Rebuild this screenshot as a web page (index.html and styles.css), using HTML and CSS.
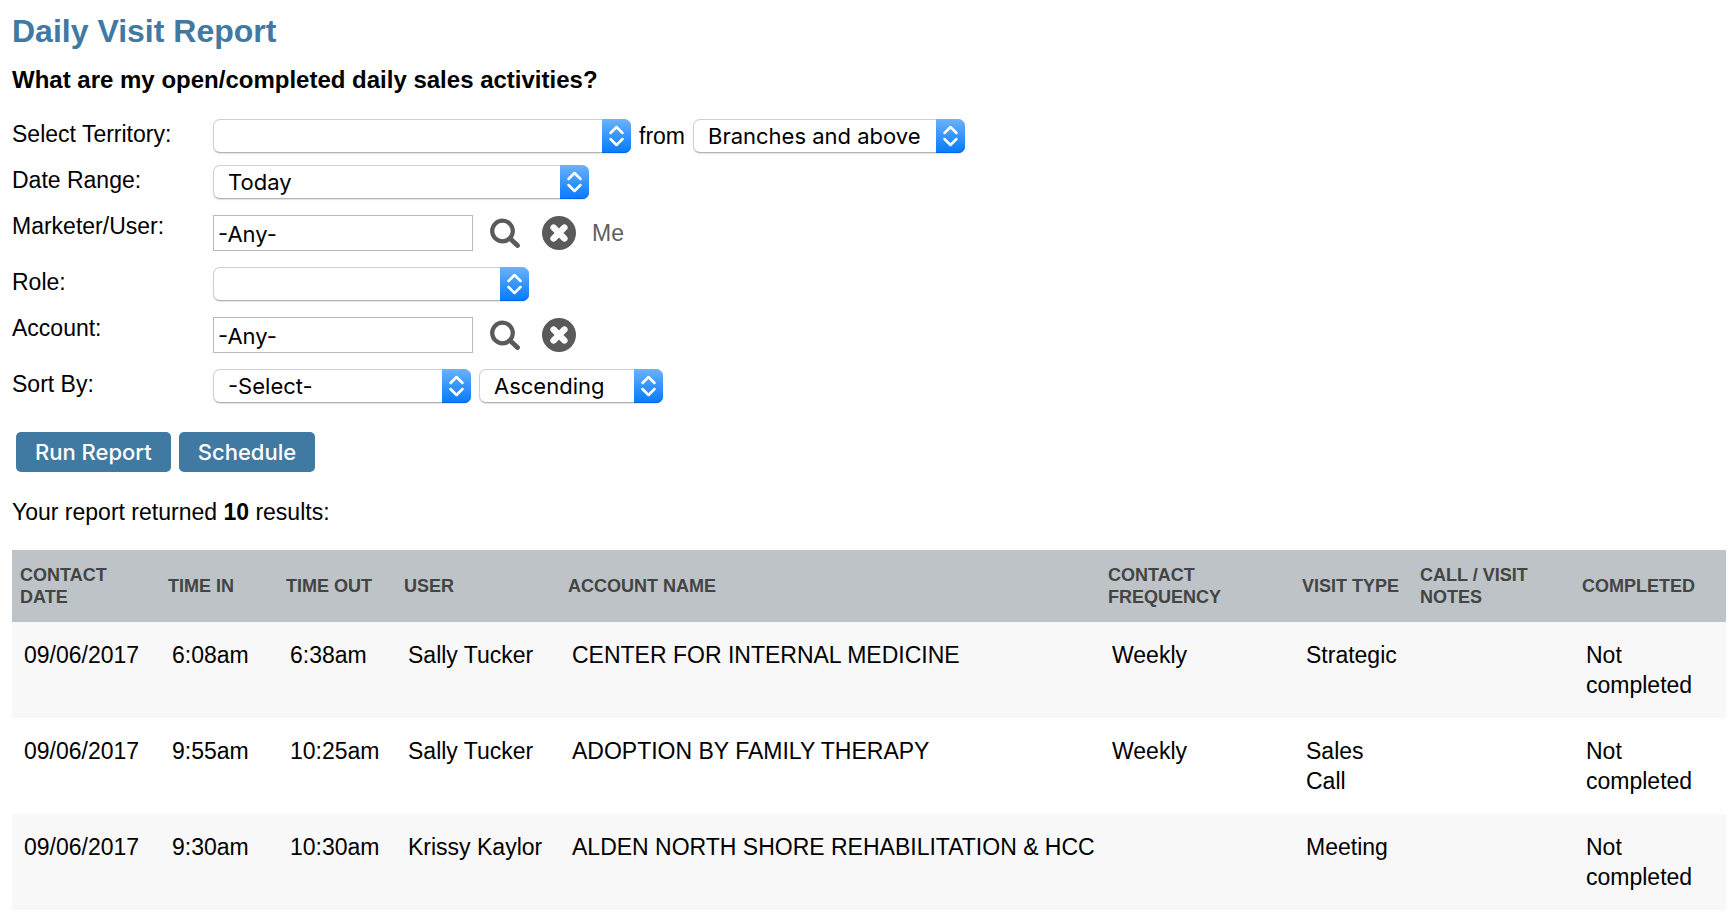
FILE: index.html
```html
<!DOCTYPE html>
<html lang="en">

<head>
  <meta charset="UTF-8">
  <meta name="viewport" content="width=device-width, initial-scale=1.0">
  <title>Daily Visit Report</title>
  <link rel="stylesheet" href="styles.css">
</head>

<body>
  <!-- shared icons -->
  <svg class="sprite" aria-hidden="true">
    <symbol id="icon-arrows" viewBox="0 0 29 34">
      <path d="M8.5 14l6-6 6 6M8.5 20l6 6 6-6" fill="none" stroke="#fff" stroke-width="2.5" stroke-linecap="round" stroke-linejoin="round" />
    </symbol>
    <symbol id="icon-search" viewBox="0 0 30 30">
      <circle cx="12.5" cy="13" r="10.3" fill="none" stroke="#5a5a5a" stroke-width="4.2" />
      <path d="M20 20.5l7.5 7" fill="none" stroke="#5a5a5a" stroke-width="4.8" stroke-linecap="round" />
    </symbol>
    <symbol id="icon-clear" viewBox="0 0 34 34">
      <circle cx="17" cy="17" r="17" fill="#5a5a5a" />
      <path d="M11.6 11.6l10.8 10.8M22.4 11.6L11.6 22.4" fill="none" stroke="#fff" stroke-width="6.4" stroke-linecap="round" />
    </symbol>
  </svg>

  <h1>Daily Visit Report</h1>
  <h2>What are my open/completed daily sales activities?</h2>

  <form>
    <div class="filters">
      <div class="row">
        <label class="row-label" for="territory">Select Territory:</label>
        <div class="row-fields">
          <span class="select select-xl">
            <select id="territory">
              <option></option>
            </select>
            <svg><use href="#icon-arrows" /></svg>
          </span>
          <label for="level">from</label>
          <span class="select select-m">
            <select id="level">
              <option>Branches and above</option>
            </select>
            <svg><use href="#icon-arrows" /></svg>
          </span>
        </div>
      </div>

      <div class="row">
        <label class="row-label" for="date-range">Date Range:</label>
        <div class="row-fields">
          <span class="select select-l">
            <select id="date-range">
              <option>Today</option>
            </select>
            <svg><use href="#icon-arrows" /></svg>
          </span>
        </div>
      </div>

      <div class="row row-lookup">
        <label class="row-label" for="marketer">Marketer/User:</label>
        <div class="row-fields">
          <input type="text" id="marketer" value="-Any-">
          <button type="button" class="icon-button" aria-label="Search users"><svg class="icon-search"><use href="#icon-search" /></svg></button>
          <button type="button" class="icon-button" aria-label="Clear user"><svg class="icon-clear"><use href="#icon-clear" /></svg></button>
          <a href="#">Me</a>
        </div>
      </div>

      <div class="row">
        <label class="row-label" for="role">Role:</label>
        <div class="row-fields">
          <span class="select select-role">
            <select id="role">
              <option></option>
            </select>
            <svg><use href="#icon-arrows" /></svg>
          </span>
        </div>
      </div>

      <div class="row row-lookup">
        <label class="row-label" for="account">Account:</label>
        <div class="row-fields">
          <input type="text" id="account" value="-Any-">
          <button type="button" class="icon-button" aria-label="Search accounts"><svg class="icon-search"><use href="#icon-search" /></svg></button>
          <button type="button" class="icon-button" aria-label="Clear account"><svg class="icon-clear"><use href="#icon-clear" /></svg></button>
        </div>
      </div>

      <div class="row">
        <label class="row-label" for="sort-by">Sort By:</label>
        <div class="row-fields">
          <span class="select select-sort">
            <select id="sort-by">
              <option>-Select-</option>
            </select>
            <svg><use href="#icon-arrows" /></svg>
          </span>
          <span class="select select-s">
            <select aria-label="Sort direction">
              <option>Ascending</option>
            </select>
            <svg><use href="#icon-arrows" /></svg>
          </span>
        </div>
      </div>
    </div>

    <div class="actions">
      <button type="submit" class="button">Run Report</button>
      <button type="button" class="button">Schedule</button>
    </div>
  </form>

  <p class="summary">Your report returned <strong>10</strong> results:</p>

  <table>
    <colgroup>
      <col class="col-date">
      <col class="col-time">
      <col class="col-time">
      <col class="col-user">
      <col>
      <col class="col-frequency">
      <col class="col-type">
      <col class="col-notes">
      <col class="col-completed">
    </colgroup>
    <thead>
      <tr>
        <th>Contact Date</th>
        <th>Time In</th>
        <th>Time Out</th>
        <th>User</th>
        <th>Account Name</th>
        <th>Contact Frequency</th>
        <th>Visit Type</th>
        <th>Call / Visit Notes</th>
        <th>Completed</th>
      </tr>
    </thead>
    <tbody>
      <tr>
        <td>09/06/2017</td>
        <td>6:08am</td>
        <td>6:38am</td>
        <td>Sally Tucker</td>
        <td class="account">CENTER FOR INTERNAL MEDICINE</td>
        <td>Weekly</td>
        <td>Strategic</td>
        <td></td>
        <td>Not completed</td>
      </tr>
      <tr>
        <td>09/06/2017</td>
        <td>9:55am</td>
        <td>10:25am</td>
        <td>Sally Tucker</td>
        <td class="account">ADOPTION BY FAMILY THERAPY</td>
        <td>Weekly</td>
        <td>Sales Call</td>
        <td></td>
        <td>Not completed</td>
      </tr>
      <tr>
        <td>09/06/2017</td>
        <td>9:30am</td>
        <td>10:30am</td>
        <td>Krissy Kaylor</td>
        <td class="account">ALDEN NORTH SHORE REHABILITATION &amp; HCC</td>
        <td></td>
        <td>Meeting</td>
        <td></td>
        <td>Not completed</td>
      </tr>
    </tbody>
  </table>
</body>

</html>
```
FILE: styles.css
```css
* {
  box-sizing: border-box;
  margin: 0;
  padding: 0;
}

body {
  font-family: "Helvetica Neue", "Liberation Sans", Arial, sans-serif;
  font-size: 23px;
  font-weight: 300;
  line-height: 30px;
  color: #000;
  background-color: #fff;
  padding: 11px 10px 0 12px;
}

.sprite {
  display: none;
}

h1 {
  font-size: 32px;
  line-height: 40px;
  color: #4079a1;
  margin-bottom: 14px;
}

h2 {
  font-size: 24px;
  line-height: 30px;
  margin-bottom: 18px;
}

strong {
  font-weight: bold;
}

/* Filters */
.row {
  display: flex;
  align-items: flex-start;
  height: 46px;
  padding-top: 6px;
}

.row-lookup {
  height: 56px;
}

.row-label {
  width: 201px;
}

.row-fields {
  display: flex;
  align-items: center;
  gap: 8px;
  height: 34px;
}

.row-lookup .row-fields {
  height: 44px;
}

.select {
  position: relative;
  height: 34px;
}

.select select {
  appearance: none;
  width: 100%;
  height: 34px;
  padding: 0 34px 0 14px;
  border: 1px solid #d0d0d0;
  border-bottom-color: #b4b4b4;
  border-radius: 7px;
  background-color: #fff;
  box-shadow: 0 1px 1px rgba(0, 0, 0, 0.12);
  font-family: Inter, sans-serif;
  font-size: 22px;
  color: #000;
}

/* blue stepper drawn over the right end of the select */
.select svg {
  position: absolute;
  top: 0;
  right: 0;
  width: 29px;
  height: 34px;
  border-radius: 0 7px 7px 0;
  background: linear-gradient(#6cb2fb, #3b98fc 45%, #067aff);
  box-shadow: inset 0 -1px 0 #0068e6;
  pointer-events: none;
}

.select-xl {
  width: 418px;
}

.select-l {
  width: 376px;
}

.select-m {
  width: 272px;
}

.select-role {
  width: 316px;
}

.select-sort {
  width: 258px;
}

.select-s {
  width: 184px;
}

input[type="text"] {
  width: 260px;
  height: 36px;
  padding: 2px 4px 0;
  border: 1px solid #b9b9b9;
  font-family: Inter, sans-serif;
  font-size: 22px;
  color: #000;
}

.icon-button {
  display: flex;
  border: none;
  background: none;
  cursor: pointer;
  margin-left: 9px;
}

.icon-search {
  width: 30px;
  height: 30px;
  margin-right: 5px;
}

.icon-clear {
  width: 34px;
  height: 34px;
}

.row-fields a {
  color: #5f5f5f;
  text-decoration: none;
  margin-left: 8px;
}

.actions {
  display: flex;
  gap: 8px;
  margin: 23px 0 25px 4px;
}

.button {
  height: 40px;
  padding: 0 19px;
  border: none;
  border-radius: 5px;
  background-color: #4079a1;
  color: #fff;
  font-family: Inter, sans-serif;
  font-size: 22px;
  font-weight: 500;
  cursor: pointer;
}

.summary {
  margin-bottom: 23px;
}

/* Results */
table {
  width: 100%;
  table-layout: fixed;
  border-collapse: collapse;
}

th {
  padding: 14px 8px;
  background-color: #bdc3c7;
  color: #444;
  font-size: 18px;
  line-height: 22px;
  text-align: left;
  text-transform: uppercase;
}

td {
  padding: 18px 8px 18px 12px;
  vertical-align: top;
}

tbody tr:nth-child(odd) {
  background-color: #f8f8f8;
}

.account {
  white-space: nowrap;
}

.col-date {
  width: 148px;
}

.col-time,
.col-type {
  width: 118px;
}

.col-user {
  width: 164px;
}

.col-frequency {
  width: 194px;
}

.col-notes {
  width: 162px;
}

.col-completed {
  width: 152px;
}
```
